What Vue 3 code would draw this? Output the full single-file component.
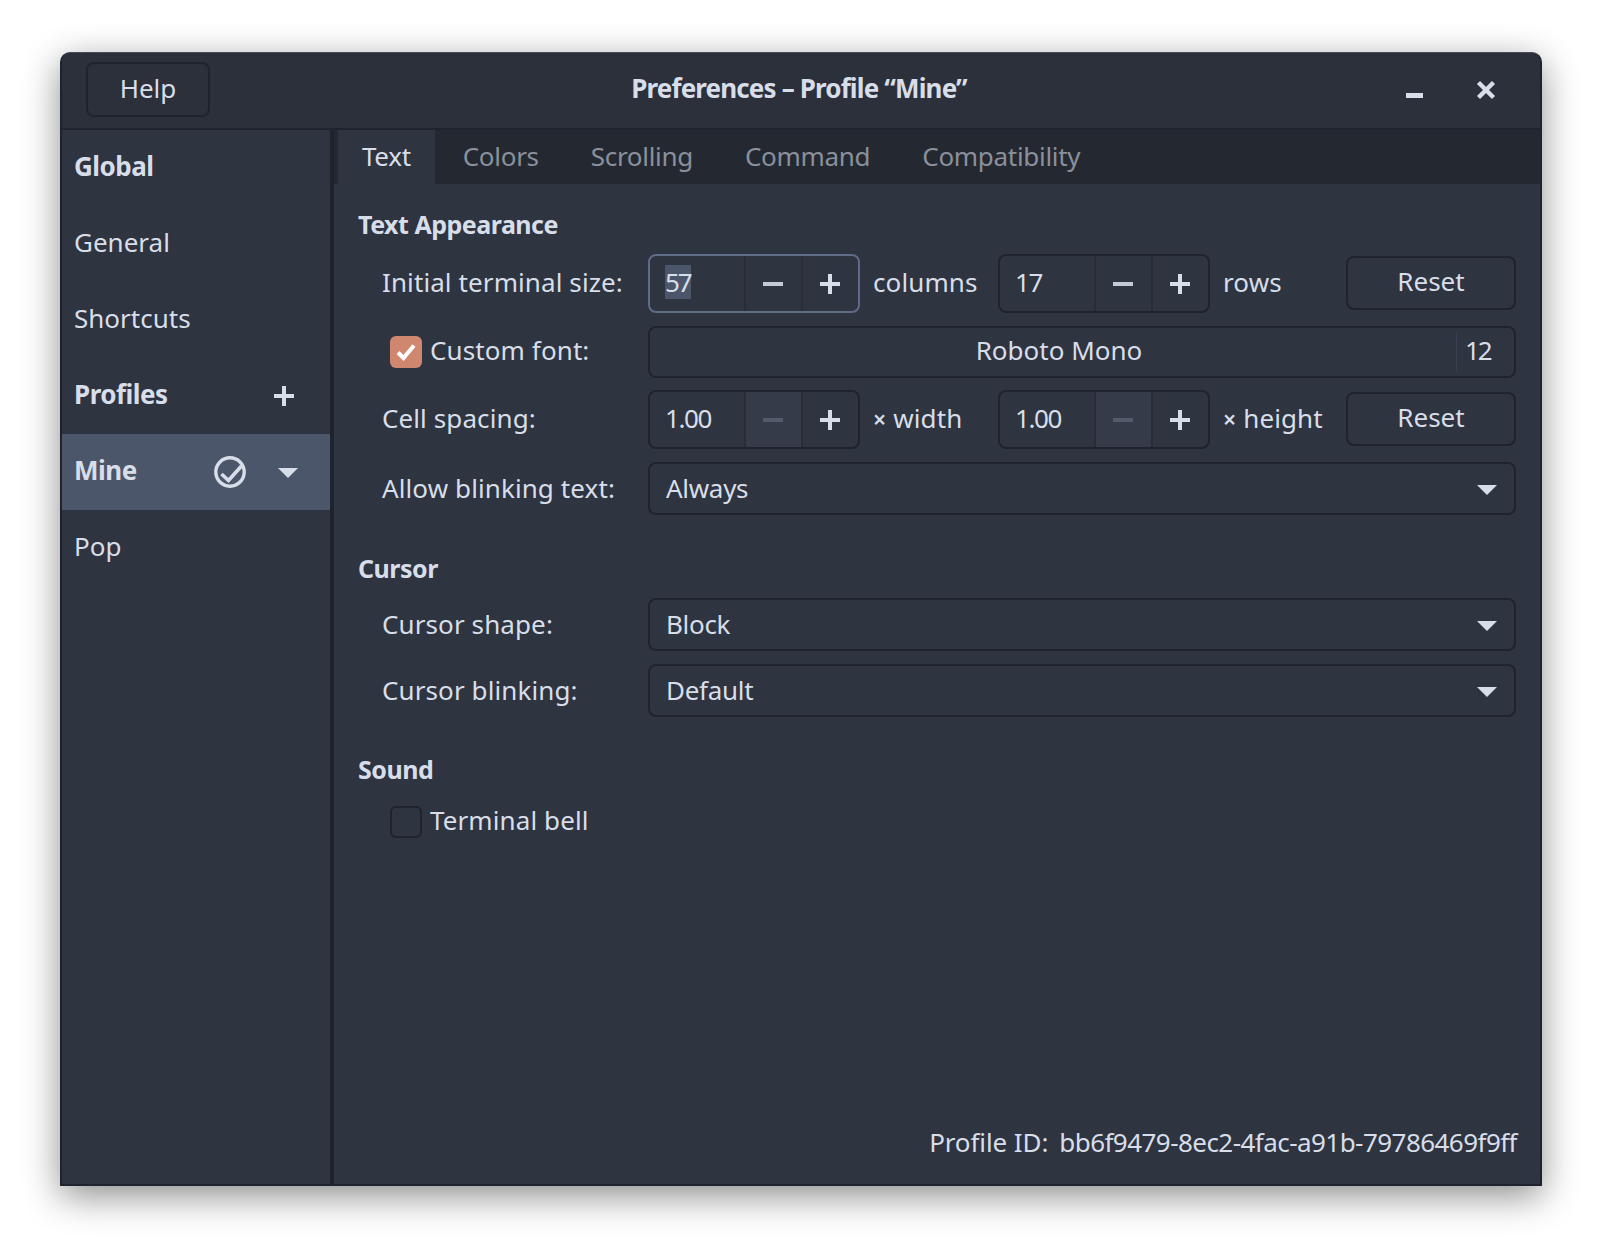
<script setup>
const tabs = ['Text', 'Colors', 'Scrolling', 'Command', 'Compatibility']
</script>

<template>
  <div class="page">
    <div class="window">
      <header class="titlebar">
        <div class="titlebar-left">
          <button class="btn help">Help</button>
        </div>
        <div class="title">Preferences – Profile “Mine”</div>
        <div class="titlebar-right">
          <span class="minimize"></span>
          <svg class="close" width="20" height="20" viewBox="0 0 20 20">
            <path d="M2.5 2.5 L17.5 17.5 M17.5 2.5 L2.5 17.5" stroke="#d8dee9" stroke-width="4.4" fill="none" />
          </svg>
        </div>
      </header>

      <div class="main">
        <aside class="sidebar">
          <div class="side-row bold">Global</div>
          <div class="side-row">General</div>
          <div class="side-row">Shortcuts</div>
          <div class="side-row bold">
            <span>Profiles</span>
            <svg class="side-plus" width="20" height="20" viewBox="0 0 20 20">
              <path d="M0 10 H20 M10 0 V20" stroke="#d8dee9" stroke-width="4" fill="none" />
            </svg>
          </div>
          <div class="side-row bold selected">
            <span>Mine</span>
            <svg class="side-check" width="32" height="32" viewBox="0 0 32 32">
              <circle cx="16" cy="16" r="14.2" stroke="#d8dee9" stroke-width="3.4" fill="none" />
              <path d="M7.5 18 L14.5 24.5 L27.5 10" stroke="#d8dee9" stroke-width="3.6" fill="none" />
            </svg>
            <span class="arrow side-arrow"></span>
          </div>
          <div class="side-row">Pop</div>
        </aside>

        <section class="content">
          <nav class="tabs">
            <div v-for="(tab, index) in tabs" :key="tab" class="tab" :class="{ active: index === 0 }">{{ tab }}</div>
          </nav>

          <div class="pane">
            <h3 class="heading">Text Appearance</h3>
            <div class="form">
              <label>Initial terminal size:</label>
              <div class="spin focused">
                <div class="spin-value"><span class="sel">57</span></div>
                <div class="spin-btn"><span class="minus"></span></div>
                <div class="spin-btn"><span class="plus"></span></div>
              </div>
              <span class="unit">columns</span>
              <div class="spin">
                <div class="spin-value">17</div>
                <div class="spin-btn"><span class="minus"></span></div>
                <div class="spin-btn"><span class="plus"></span></div>
              </div>
              <span class="unit">rows</span>
              <button class="btn reset">Reset</button>

              <label class="check-label">
                <span class="check on">
                  <svg width="22" height="20" viewBox="0 0 22 20">
                    <path d="M3 10.5 L8.5 16 L19 3.5" stroke="#fff" stroke-width="4" fill="none" />
                  </svg>
                </span>
                <span class="check-text">Custom font:</span>
              </label>
              <button class="btn font-btn">
                <span class="font-name">Roboto Mono</span>
                <span class="font-size">12</span>
              </button>

              <label>Cell spacing:</label>
              <div class="spin">
                <div class="spin-value">1.00</div>
                <div class="spin-btn disabled"><span class="minus"></span></div>
                <div class="spin-btn"><span class="plus"></span></div>
              </div>
              <span class="unit"><small>×</small>width</span>
              <div class="spin">
                <div class="spin-value">1.00</div>
                <div class="spin-btn disabled"><span class="minus"></span></div>
                <div class="spin-btn"><span class="plus"></span></div>
              </div>
              <span class="unit"><small>×</small>height</span>
              <button class="btn reset">Reset</button>

              <label class="combo-label">Allow blinking text:</label>
              <div class="combo"><span class="combo-text">Always</span><span class="arrow"></span></div>
            </div>

            <h3 class="heading next">Cursor</h3>
            <div class="form">
              <label class="combo-label">Cursor shape:</label>
              <div class="combo"><span class="combo-text">Block</span><span class="arrow"></span></div>
              <label class="combo-label">Cursor blinking:</label>
              <div class="combo"><span class="combo-text">Default</span><span class="arrow"></span></div>
            </div>

            <h3 class="heading next sound">Sound</h3>
            <div class="form bell">
              <label class="check-label">
                <span class="check"></span>
                <span class="check-text">Terminal bell</span>
              </label>
            </div>

            <div class="profile-id">Profile ID:<span class="profile-hash">bb6f9479-8ec2-4fac-a91b-79786469f9ff</span></div>
          </div>
        </section>
      </div>
    </div>
  </div>
</template>

<style>
html, body {
  margin: 0;
  background: #fff;
}
</style>

<style scoped>
.page {
  padding: 52px 60px 68px;
  font-family: "Noto Sans", sans-serif;
  font-size: 26px;
  color: #d8dee9;
}

.window {
  width: 1482px;
  height: 1134px;
  box-sizing: border-box;
  display: flex;
  flex-direction: column;
  background: #2e3440;
  border: 2px solid #1f232d;
  border-top: 1px solid #454b58;
  border-radius: 10px 10px 0 0;
  box-shadow: 0 10px 36px rgba(0, 0, 0, 0.45);
}

.titlebar {
  height: 77px;
  flex: none;
  box-sizing: border-box;
  display: grid;
  grid-template-columns: 1fr auto 1fr;
  align-items: center;
  padding: 0 4px 2px 0;
  background: #2b303b;
  border-bottom: 2px solid #1f232d;
  border-radius: 8px 8px 0 0;
}

.titlebar-left {
  padding-left: 24px;
}

.titlebar-right {
  display: flex;
  justify-content: flex-end;
  align-items: center;
  padding-right: 40px;
  gap: 53px;
}

.title {
  font-weight: 700;
  font-size: 26px;
  letter-spacing: -0.85px;
  padding-bottom: 4px;
}

.minimize {
  display: block;
  width: 17px;
  height: 5px;
  margin-top: 12px;
  background: #d8dee9;
}

.btn {
  box-sizing: border-box;
  font: inherit;
  color: inherit;
  background: transparent;
  border: 2px solid #1f232d;
  border-radius: 8px;
  padding: 0 0 4px;
}

.help {
  width: 124px;
  height: 55px;
}

.main {
  flex: 1;
  display: flex;
  min-height: 0;
}

.sidebar {
  width: 272px;
  flex: none;
  box-sizing: border-box;
  border-right: 4px solid #1f232d;
}

.side-row {
  height: 76px;
  box-sizing: border-box;
  display: flex;
  align-items: center;
  padding: 0 0 4px 12px;
  position: relative;
}

.bold {
  font-weight: 700;
  letter-spacing: -0.5px;
}

.selected {
  background: #4c566a;
}

.side-plus {
  position: absolute;
  left: 212px;
  top: 28px;
}

.side-check {
  position: absolute;
  left: 152px;
  top: 22px;
}

.arrow {
  width: 0;
  height: 0;
  border-left: 10px solid transparent;
  border-right: 10px solid transparent;
  border-top: 10px solid #d8dee9;
}

.side-arrow {
  position: absolute;
  left: 216px;
  top: 34px;
}

.content {
  flex: 1;
  min-width: 0;
  display: flex;
  flex-direction: column;
}

.tabs {
  height: 54px;
  flex: none;
  display: flex;
  gap: 4px;
  padding-left: 4px;
  background: #242831;
}

.tab {
  display: flex;
  align-items: center;
  padding: 0 24px 2px;
  color: #8a909c;
  letter-spacing: -0.3px;
}

.tab.active {
  color: #d8dee9;
  background: #2e3440;
}

.pane {
  flex: 1;
  display: flex;
  flex-direction: column;
  padding: 25px 24px 27px;
}

.heading {
  margin: 0 0 15px;
  font-size: 25px;
  line-height: 30px;
  font-weight: 700;
  letter-spacing: -0.5px;
}

.heading.next {
  margin-top: 38px;
}

.heading.sound {
  margin-top: 37px;
}

.form {
  display: grid;
  grid-template-columns: 266px 212px 138px 212px 136px 170px;
  align-items: center;
  row-gap: 13px;
  padding-left: 24px;
}

.form.bell {
  margin-top: 3px;
}

.form label,
.unit {
  margin-bottom: 4px;
  letter-spacing: 0.1px;
}

.form label.combo-label {
  margin-bottom: 2px;
}

.spin {
  height: 59px;
  box-sizing: border-box;
  display: flex;
  border: 2px solid #1f232d;
  border-radius: 8px;
  overflow: hidden;
}

.spin.focused {
  border-color: #5e6c88;
}

.spin-value {
  flex: 1;
  display: flex;
  align-items: center;
  padding: 0 0 4px 15px;
  letter-spacing: -1.4px;
}

.sel {
  background: #4c566a;
  line-height: 34px;
  letter-spacing: -2px;
}

.spin-btn {
  width: 57px;
  box-sizing: border-box;
  display: flex;
  align-items: center;
  justify-content: center;
  border-left: 2px solid #282d37;
  padding-right: 2px;
}

.spin-btn.disabled {
  background: #363b4a;
}

.spin-btn.disabled .minus {
  background: #535a69;
}

.minus {
  width: 20px;
  height: 4px;
  background: #c5cbd6;
}

.plus {
  position: relative;
  width: 20px;
  height: 4px;
  background: #d8dee9;
}

.plus::after {
  content: "";
  position: absolute;
  left: 8px;
  top: -8px;
  width: 4px;
  height: 20px;
  background: #d8dee9;
}

.unit {
  padding-left: 13px;
}

.unit small {
  font-size: 23px;
  font-weight: 600;
  margin-right: 7px;
}

.reset {
  height: 54px;
  margin-bottom: 2px;
}

.check-label {
  display: flex;
  align-items: center;
  gap: 8px;
  padding-left: 8px;
}

.form label.check-label {
  margin-bottom: 0;
}

.check-text {
  margin-bottom: 4px;
}

.check {
  width: 32px;
  height: 32px;
  box-sizing: border-box;
  display: flex;
  align-items: center;
  justify-content: center;
  border: 2px solid #1f232d;
  border-radius: 6px;
}

.check.on {
  background: #d08770;
  border: none;
}

.font-btn {
  grid-column: 2 / 7;
  height: 52px;
  display: flex;
  align-items: center;
  margin-bottom: -1px;
}

.font-name {
  flex: 1;
  text-align: center;
  padding-left: 12px;
}

.font-size {
  width: 58px;
  box-sizing: border-box;
  border-left: 1px solid #3b414e;
  line-height: 34px;
  padding: 0 0 4px 8px;
  text-align: left;
  letter-spacing: -2px;
  margin-top: 4px;
}

.combo {
  grid-column: 2 / 7;
  height: 53px;
  box-sizing: border-box;
  display: flex;
  align-items: center;
  justify-content: space-between;
  padding: 0 17px 0 16px;
  border: 2px solid #1f232d;
  border-radius: 8px;
}

.combo-text {
  margin-bottom: 2px;
  letter-spacing: -0.3px;
}

.combo .arrow {
  margin-top: 2px;
}

.profile-id {
  margin-top: auto;
  text-align: right;
  line-height: 30px;
  margin-right: -1px;
  letter-spacing: -0.1px;
}

.profile-hash {
  margin-left: 11px;
  letter-spacing: -0.55px;
}
</style>
